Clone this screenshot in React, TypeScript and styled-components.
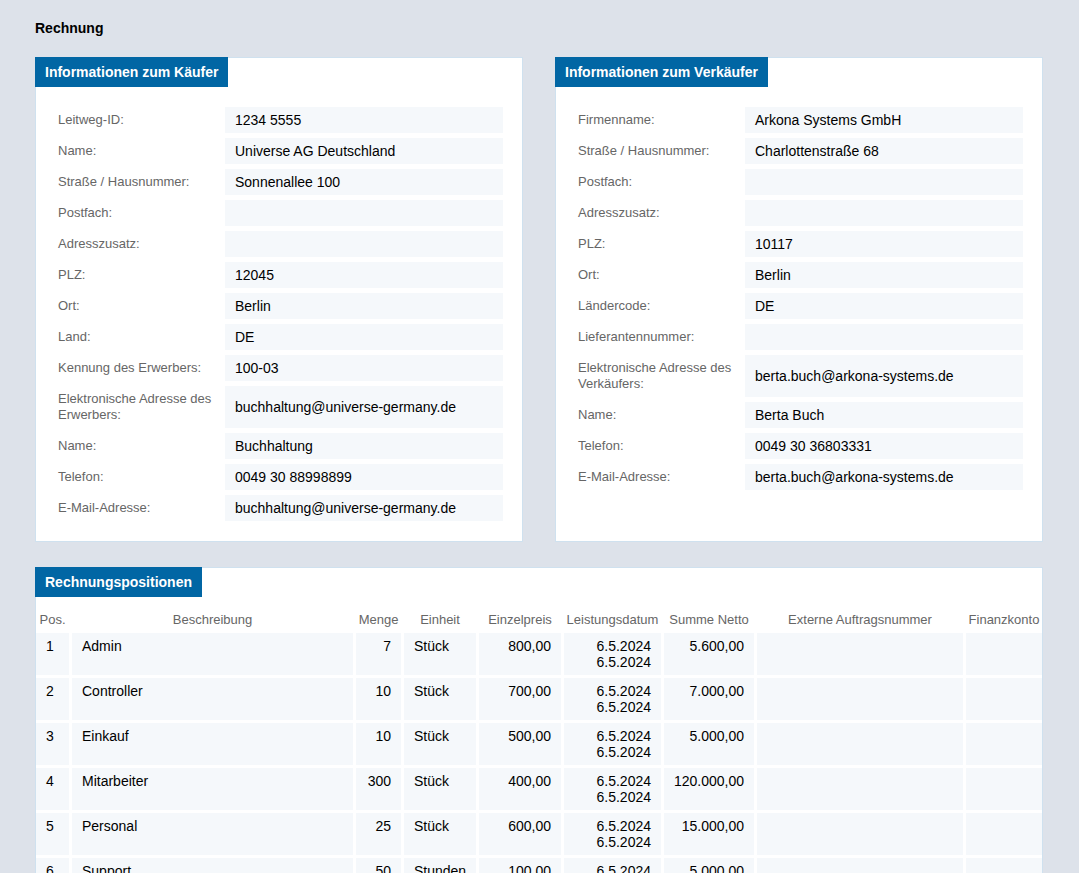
import React from 'react'
import styled, { createGlobalStyle } from 'styled-components'

const GlobalStyle = createGlobalStyle`
  html, body {
    margin: 0;
    padding: 0;
    overflow: hidden;
    background: #dde2ea;
  }
  body {
    font-family: "Liberation Sans", Arial, sans-serif;
    color: #000;
  }
`

type Field = { label: string; value?: string }

const buyer: Field[] = [
  { label: 'Leitweg-ID:', value: '1234 5555' },
  { label: 'Name:', value: 'Universe AG Deutschland' },
  { label: 'Straße / Hausnummer:', value: 'Sonnenallee 100' },
  { label: 'Postfach:' },
  { label: 'Adresszusatz:' },
  { label: 'PLZ:', value: '12045' },
  { label: 'Ort:', value: 'Berlin' },
  { label: 'Land:', value: 'DE' },
  { label: 'Kennung des Erwerbers:', value: '100-03' },
  { label: 'Elektronische Adresse des Erwerbers:', value: 'buchhaltung@universe-germany.de' },
  { label: 'Name:', value: 'Buchhaltung' },
  { label: 'Telefon:', value: '0049 30 88998899' },
  { label: 'E-Mail-Adresse:', value: 'buchhaltung@universe-germany.de' },
]

const seller: Field[] = [
  { label: 'Firmenname:', value: 'Arkona Systems GmbH' },
  { label: 'Straße / Hausnummer:', value: 'Charlottenstraße 68' },
  { label: 'Postfach:' },
  { label: 'Adresszusatz:' },
  { label: 'PLZ:', value: '10117' },
  { label: 'Ort:', value: 'Berlin' },
  { label: 'Ländercode:', value: 'DE' },
  { label: 'Lieferantennummer:' },
  { label: 'Elektronische Adresse des Verkäufers:', value: 'berta.buch@arkona-systems.de' },
  { label: 'Name:', value: 'Berta Buch' },
  { label: 'Telefon:', value: '0049 30 36803331' },
  { label: 'E-Mail-Adresse:', value: 'berta.buch@arkona-systems.de' },
]

type Position = {
  pos: number
  text: string
  qty: string
  unit: string
  price: string
  total: string
}

const positions: Position[] = [
  { pos: 1, text: 'Admin', qty: '7', unit: 'Stück', price: '800,00', total: '5.600,00' },
  { pos: 2, text: 'Controller', qty: '10', unit: 'Stück', price: '700,00', total: '7.000,00' },
  { pos: 3, text: 'Einkauf', qty: '10', unit: 'Stück', price: '500,00', total: '5.000,00' },
  { pos: 4, text: 'Mitarbeiter', qty: '300', unit: 'Stück', price: '400,00', total: '120.000,00' },
  { pos: 5, text: 'Personal', qty: '25', unit: 'Stück', price: '600,00', total: '15.000,00' },
  { pos: 6, text: 'Support', qty: '50', unit: 'Stunden', price: '100,00', total: '5.000,00' },
  { pos: 7, text: 'Training', qty: '20', unit: 'Stunden', price: '100,00', total: '2.000,00' },
]

const headers = [
  'Pos.',
  'Beschreibung',
  'Menge',
  'Einheit',
  'Einzelpreis',
  'Leistungsdatum',
  'Summe Netto',
  'Externe Auftragsnummer',
  'Finanzkonto',
]

const App = () => {
  return (
    <>
      <GlobalStyle />
      <Page>
        <Title>Rechnung</Title>
        <CardRow>
          <FieldCard title="Informationen zum Käufer" fields={buyer} />
          <FieldCard title="Informationen zum Verkäufer" fields={seller} />
        </CardRow>
        <Card>
          <CardHeader>Rechnungspositionen</CardHeader>
          <Table>
            {headers.map(h => (
              <HeadCell key={h}>{h}</HeadCell>
            ))}
            {positions.map(p => (
              <React.Fragment key={p.pos}>
                <Cell>{p.pos}</Cell>
                <Cell>{p.text}</Cell>
                <Cell right>{p.qty}</Cell>
                <Cell>{p.unit}</Cell>
                <Cell right>{p.price}</Cell>
                <Cell right>
                  6.5.2024
                  <br />
                  6.5.2024
                </Cell>
                <Cell right>{p.total}</Cell>
                <Cell />
                <Cell />
              </React.Fragment>
            ))}
          </Table>
        </Card>
      </Page>
    </>
  )
}

const FieldCard = ({ title, fields }: { title: string; fields: Field[] }) => (
  <Card>
    <CardHeader>{title}</CardHeader>
    <FieldGrid>
      {fields.map((f, i) => (
        <React.Fragment key={i}>
          <Label>{f.label}</Label>
          <Value>{f.value}</Value>
        </React.Fragment>
      ))}
    </FieldGrid>
  </Card>
)

const Page = styled.div`
  padding: 20px 36px 40px 35px;
`
const Title = styled.div`
  font-size: 14px;
  font-weight: bold;
  line-height: 16px;
  margin-bottom: 21px;
`
const CardRow = styled.div`
  display: grid;
  grid-template-columns: 1fr 1fr;
  column-gap: 32px;
  margin-bottom: 25px;
`
const Card = styled.div`
  background: #fff;
  border: 1px solid #cfe1ef;
`
const CardHeader = styled.div`
  display: inline-block;
  background: #0166a4;
  color: #fff;
  font-size: 14px;
  font-weight: bold;
  height: 30px;
  line-height: 30px;
  padding: 0 10px;
  margin: -1px 0 0 -1px;
  vertical-align: top;
`
const FieldGrid = styled.div`
  display: grid;
  grid-template-columns: 167px 1fr;
  row-gap: 5px;
  padding: 20px 19px 20px 22px;
`
const Label = styled.div`
  display: flex;
  align-items: center;
  font-size: 13px;
  line-height: 16px;
  color: #666;
  padding: 5px 8px 5px 0;
`
const Value = styled.div`
  display: flex;
  align-items: center;
  min-height: 16px;
  padding: 5px 10px;
  background: #f5f8fb;
  font-size: 14px;
  line-height: 16px;
`
const Table = styled.div`
  display: grid;
  grid-template-columns: 33px 281px 45px 72px 82px 97px 90px 206px 1fr;
  gap: 3px;
`
const HeadCell = styled.div`
  font-size: 13px;
  line-height: 16px;
  color: #666;
  text-align: center;
  white-space: nowrap;
  padding: 15px 0 2px;
`
const Cell = styled.div<{ right?: boolean }>`
  background: #f5f8fb;
  font-size: 14px;
  line-height: 16px;
  padding: 5px 10px;
  min-height: 32px;
  text-align: ${p => (p.right ? 'right' : 'left')};
  white-space: nowrap;
`

export default App
